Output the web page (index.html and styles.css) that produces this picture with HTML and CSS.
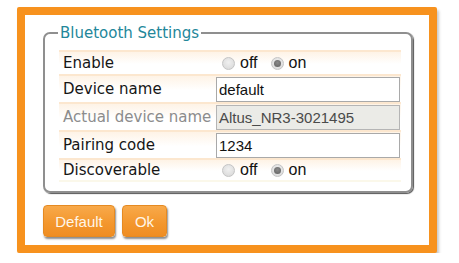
FILE: index.html
```html
<!DOCTYPE html>
<html>
<head>
<meta charset="utf-8">
<link rel="stylesheet" href="styles.css">
</head>
<body>
<div class="frame">
  <fieldset class="settings">
    <legend class="title">Bluetooth Settings</legend>
    <div class="rows">
      <div class="row">
        <div class="label">Enable</div>
        <div class="value radios">
          <span class="radio"></span><span class="opt">off</span>
          <span class="radio checked"></span><span class="opt">on</span>
        </div>
      </div>
      <div class="row tall">
        <div class="label">Device name</div>
        <div class="value"><div class="input">default</div></div>
      </div>
      <div class="row tall">
        <div class="label disabled">Actual device name</div>
        <div class="value"><div class="input readonly">Altus_NR3-3021495</div></div>
      </div>
      <div class="row tall">
        <div class="label">Pairing code</div>
        <div class="value"><div class="input">1234</div></div>
      </div>
      <div class="row last">
        <div class="label">Discoverable</div>
        <div class="value radios">
          <span class="radio"></span><span class="opt">off</span>
          <span class="radio checked"></span><span class="opt">on</span>
        </div>
      </div>
    </div>
  </fieldset>
  <div class="buttons">
    <button class="btn btn-default">Default</button>
    <button class="btn btn-ok">Ok</button>
  </div>
</div>
</body>
</html>
```

FILE: styles.css
```css
html, body {
  margin: 0;
  padding: 0;
  background: #ffffff;
}

.frame {
  box-sizing: border-box;
  margin: 7px 0 0 17px;
  width: 420px;
  height: 246px;
  border: 8px solid #f7921e;
  border-radius: 2px;
  background: #fff;
  box-shadow: 2px 3px 3px rgba(0, 0, 0, 0.22);
  padding: 9px 0 0 18px;
}

.settings {
  box-sizing: border-box;
  margin: 0;
  width: 370px;
  border: 2px solid #8f8f8f;
  border-radius: 7px;
  box-shadow: 1px 1px 1px #555;
  padding: 8px 10px 9px 14px;
}

.title {
  font-family: "DejaVu Sans", Verdana, sans-serif;
  font-size: 15px;
  color: #23879a;
  padding: 0 2px;
  margin-left: -1px;
  line-height: 18px;
}

.rows {
  display: flex;
  flex-direction: column;
}

.row {
  display: grid;
  grid-template-columns: 157px 1fr;
  align-items: center;
  height: 24px;
  border-top: 2px solid #fce7cf;
  background: linear-gradient(to bottom, #fef3e6 0%, #ffffff 55%);
  box-sizing: border-box;
}

.row.tall {
  height: 28px;
}

.row.last {
  height: 24px;
  border-bottom: 2px solid #fbf8ea;
}

.label {
  font-family: "DejaVu Sans", Verdana, sans-serif;
  font-size: 15px;
  color: #161616;
  padding-left: 4px;
  white-space: nowrap;
}

.label.disabled {
  color: #8c8c8c;
}

.value {
  display: flex;
  align-items: center;
  font-family: "Liberation Sans", Arial, sans-serif;
  font-size: 15px;
  color: #111;
}

.input {
  box-sizing: border-box;
  width: 184px;
  height: 25px;
  border: 1px solid #a9a9a9;
  background: #fff;
  padding: 0 2px;
  line-height: 23px;
  color: #111;
}

.input.readonly {
  background: #ebebe7;
  color: #4a4a4a;
  border-color: #b5b5b5;
}

.radios {
  padding-left: 6px;
  font-size: 16px;
}

.radio {
  box-sizing: border-box;
  display: inline-block;
  width: 13px;
  height: 13px;
  border-radius: 50%;
  border: 1px solid #c4c4c4;
  background: radial-gradient(circle at 50% 40%, #f0f0f0 0%, #d6d6d6 100%);
  position: relative;
}

.radio.checked::after {
  content: "";
  position: absolute;
  left: 2px;
  top: 2px;
  width: 7px;
  height: 7px;
  border-radius: 50%;
  background: radial-gradient(circle at 50% 40%, #8a8a8a 0%, #5e5e5e 100%);
}

.opt {
  margin-left: 5px;
  margin-right: 13px;
}

.buttons {
  display: flex;
  gap: 7px;
  margin-top: 12px;
}

.btn {
  box-sizing: border-box;
  height: 32px;
  border: 1px solid #e58a22;
  border-radius: 4px;
  background: linear-gradient(to bottom, #f8a94a 0%, #f3962c 60%, #ef8d22 100%);
  box-shadow: 1px 2px 2px rgba(0, 0, 0, 0.45);
  color: #fff6e8;
  font-family: "Liberation Sans", Arial, sans-serif;
  font-size: 15px;
  padding: 0;
}

.btn-default {
  width: 72px;
}

.btn-ok {
  width: 45px;
}
```
